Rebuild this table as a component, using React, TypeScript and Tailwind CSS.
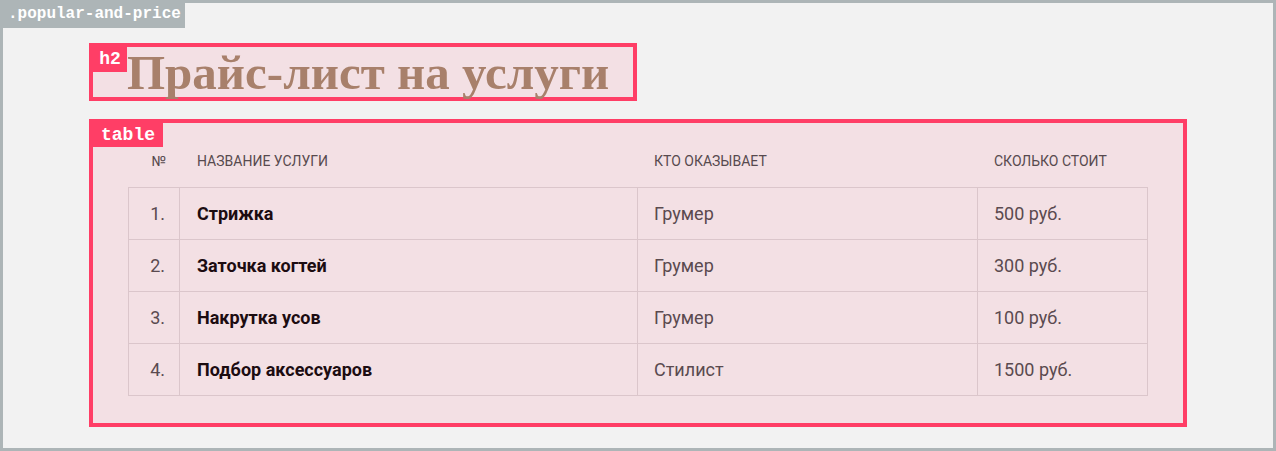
import React from "react";

const rows = [
  { n: "1.", name: "Стрижка", who: "Грумер", price: "500 руб." },
  { n: "2.", name: "Заточка когтей", who: "Грумер", price: "300 руб." },
  { n: "3.", name: "Накрутка усов", who: "Грумер", price: "100 руб." },
  { n: "4.", name: "Подбор аксессуаров", who: "Стилист", price: "1500 руб." },
];

export default function App() {
  return (
    <div className="w-[1276px] h-[451px] overflow-hidden">
      <section className="relative w-[1276px] h-[451px] border-[3px] border-[#adb5b7] bg-[#f2f2f2] pl-[86px] pt-[40px] font-['Roboto',sans-serif]">
        <span className="absolute -top-[3px] -left-[3px] h-[28px] w-[185px] bg-[#adb5b7] text-white font-bold text-[16px] leading-[28px] pl-[8px] font-['Liberation_Mono',monospace]">
          .popular-and-price
        </span>

        <h2 className="relative w-[548px] h-[58px] border-4 border-[#ff3e66] bg-[#f3e0e4] pl-[34px] text-[49px] leading-[51px] font-bold text-[#a8806b] font-['Liberation_Serif',serif] whitespace-nowrap">
          <span className="absolute top-0 left-0 w-[34px] h-[25px] bg-[#ff3e66] text-white text-[18px] leading-[25px] font-bold text-center font-['Liberation_Mono',monospace]">
            h2
          </span>
          Прайс-лист на услуги
        </h2>

        <div className="relative mt-[18px] w-[1098px] h-[308px] border-4 border-[#ff3e66] bg-[#f3e0e4] pl-[35px]">
          <span className="absolute top-0 left-0 w-[70px] h-[24px] bg-[#ff3e66] text-white text-[18px] leading-[24px] font-bold text-center font-['Liberation_Mono',monospace]">
            table
          </span>

          <div className="grid grid-cols-[52px_458px_340px_170px] h-[64px] items-end pb-[18px] text-[14px] leading-4 uppercase text-[#574a4e]">
            <div className="text-right pr-[14px]">№</div>
            <div className="pl-[17px]">Название услуги</div>
            <div className="pl-[16px]">Кто оказывает</div>
            <div className="pl-[16px]">Сколько стоит</div>
          </div>

          <div className="grid w-[1020px] grid-cols-[51px_458px_340px_170px] border-l border-t border-[#dbc6cb] text-[18px] leading-[21px] text-[#5a4a4f]">
            {rows.map((r) => (
              <React.Fragment key={r.n}>
                <div className="h-[52px] flex items-center justify-end pr-[14px] border-r border-b border-[#dbc6cb]">
                  {r.n}
                </div>
                <div className="h-[52px] flex items-center pl-[17px] border-r border-b border-[#dbc6cb] font-bold text-[#1c0c11]">
                  {r.name}
                </div>
                <div className="h-[52px] flex items-center pl-[16px] border-r border-b border-[#dbc6cb]">
                  {r.who}
                </div>
                <div className="h-[52px] flex items-center pl-[16px] border-r border-b border-[#dbc6cb]">
                  {r.price}
                </div>
              </React.Fragment>
            ))}
          </div>
        </div>
      </section>
    </div>
  );
}
